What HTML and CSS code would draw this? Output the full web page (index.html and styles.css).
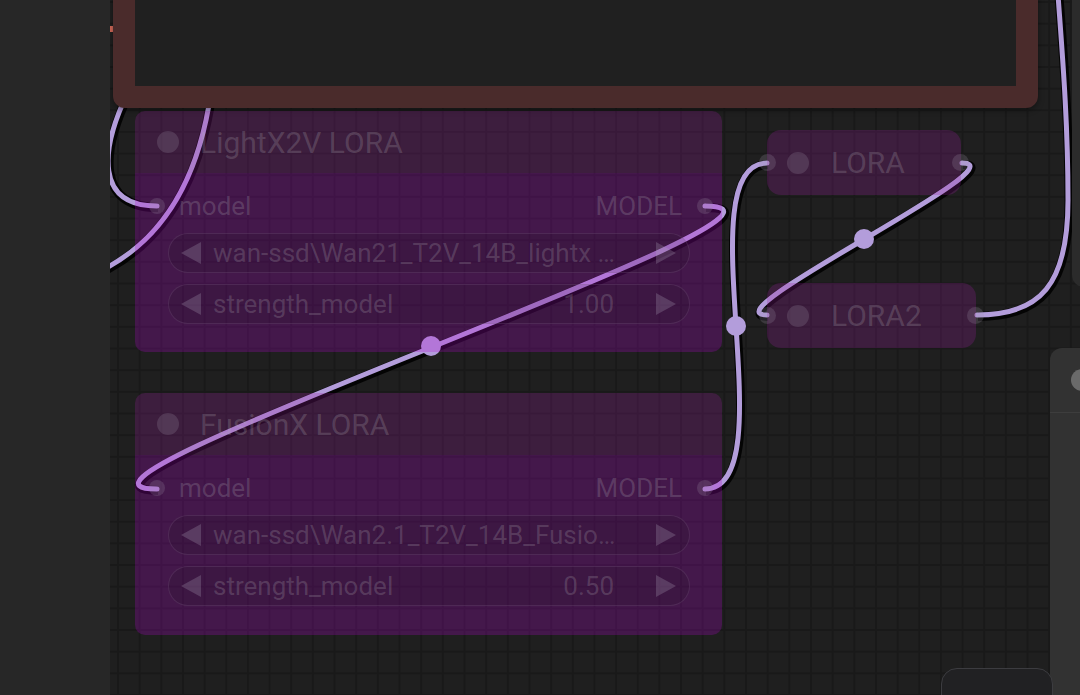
FILE: index.html
```html
<!DOCTYPE html>
<html lang="en">
<head>
  <meta charset="UTF-8">
  <meta name="viewport" content="width=device-width, initial-scale=1.0">
  <title>Graph</title>
  <link rel="stylesheet" href="styles.css">
</head>
<body>
  <aside class="sidebar"></aside>

  <main class="canvas">
    <!-- links (drawn under nodes) -->
    <svg class="links" viewBox="110 0 970 695" xmlns="http://www.w3.org/2000/svg">
      <defs>
        <path id="l1" d="M 128 92 C 100 150, 95 206, 157 206" />
        <path id="l2" d="M 211 92 C 200 170, 170 235, 104 269" />
        <path id="l3" d="M 705 206 C 859 206, 3 489, 157 489" />
        <path id="l4" d="M 705 489 C 788 489, 684 163, 767 163" />
        <path id="l5" d="M 962 163 C 1024 163, 705 315, 767 315" />
        <path id="l6" d="M 977 315 C 1040 315, 1068 285, 1068 200 C 1068 120, 1062 50, 1058 -5" />
      </defs>
      <g class="wire-shadow" transform="translate(1 1.5)">
        <use href="#l1" /><use href="#l2" /><use href="#l3" />
        <use href="#l4" /><use href="#l5" /><use href="#l6" />
      </g>
      <g class="wire">
        <use href="#l1" /><use href="#l2" /><use href="#l3" />
        <use href="#l4" /><use href="#l5" /><use href="#l6" />
      </g>
      <g class="wire-dot">
        <circle cx="431" cy="346" r="10" />
        <circle cx="736" cy="326" r="10" />
        <circle cx="864" cy="239" r="10" />
      </g>
    </svg>

    <div class="red-stub"></div>
    <div class="frame"></div>

    <div class="node node-a">
      <div class="node-title"><span class="title-dot"></span>LightX2V LORA</div>
      <div class="node-body">
        <div class="slots">
          <span class="slot-dot"></span>
          <span class="slot-in">model</span>
          <span class="slot-out">MODEL</span>
          <span class="slot-dot"></span>
        </div>
        <div class="widgets">
          <div class="widget">
            <svg class="arrow" viewBox="0 0 20 22"><polygon points="20,0 20,22 0,11" /></svg>
            <span class="w-name">wan-ssd\Wan21_T2V_14B_lightx …</span>
            <svg class="arrow" viewBox="0 0 20 22"><polygon points="0,0 0,22 20,11" /></svg>
          </div>
          <div class="widget">
            <svg class="arrow" viewBox="0 0 20 22"><polygon points="20,0 20,22 0,11" /></svg>
            <span class="w-name">strength_model</span>
            <span class="w-value">1.00</span>
            <svg class="arrow" viewBox="0 0 20 22"><polygon points="0,0 0,22 20,11" /></svg>
          </div>
        </div>
      </div>
    </div>

    <div class="node node-b">
      <div class="node-title"><span class="title-dot"></span>FusionX LORA</div>
      <div class="node-body">
        <div class="slots">
          <span class="slot-dot"></span>
          <span class="slot-in">model</span>
          <span class="slot-out">MODEL</span>
          <span class="slot-dot"></span>
        </div>
        <div class="widgets">
          <div class="widget">
            <svg class="arrow" viewBox="0 0 20 22"><polygon points="20,0 20,22 0,11" /></svg>
            <span class="w-name">wan-ssd\Wan2.1_T2V_14B_Fusio…</span>
            <svg class="arrow" viewBox="0 0 20 22"><polygon points="0,0 0,22 20,11" /></svg>
          </div>
          <div class="widget">
            <svg class="arrow" viewBox="0 0 20 22"><polygon points="20,0 20,22 0,11" /></svg>
            <span class="w-name">strength_model</span>
            <span class="w-value">0.50</span>
            <svg class="arrow" viewBox="0 0 20 22"><polygon points="0,0 0,22 20,11" /></svg>
          </div>
        </div>
      </div>
    </div>

    <div class="mini mini-a">
      <span class="mini-slot in"></span>
      <span class="title-dot"></span>LORA
      <span class="mini-slot out"></span>
    </div>
    <div class="mini mini-b">
      <span class="mini-slot in"></span>
      <span class="title-dot"></span>LORA2
      <span class="mini-slot out"></span>
    </div>

    <div class="panel-top"></div>
    <div class="panel-side">
      <div class="panel-head"><span class="panel-knob"></span></div>
    </div>
    <div class="dock"></div>
  </main>
</body>
</html>
```

FILE: styles.css
```css
:root {
  --sidebar: #272727;
  --bg: #1f1f1f;
  --grid: #191919;
  --frame: #4a2b2b;
  --wire: #b39ddb;
  --node-title: rgba(150, 28, 155, 0.25);
  --node-body: rgba(178, 5, 206, 0.25);
  --node-text: rgba(180, 180, 185, 0.23);
  --node-dot: rgba(160, 150, 170, 0.22);
}

* {
  margin: 0;
  padding: 0;
  box-sizing: border-box;
}

body {
  width: 1080px;
  height: 695px;
  display: flex;
  overflow: hidden;
  font-family: Roboto, 'Liberation Sans', sans-serif;
  background-color: var(--bg);
}

.sidebar {
  width: 110px;
  flex-shrink: 0;
  background-color: var(--sidebar);
}

.canvas {
  flex: 1;
  position: relative;
  overflow: hidden;
  background-color: var(--bg);
  background-image:
    linear-gradient(to right, var(--grid) 2px, transparent 2px),
    linear-gradient(to bottom, var(--grid) 2px, transparent 2px);
  background-size: 21.67px 21.67px;
  background-position: 7px 1px;
}

/* links */
.links {
  position: absolute;
  top: 0;
  left: 0;
  width: 970px;
  height: 695px;
}

.links use {
  fill: none;
}

.wire-shadow {
  stroke: #000;
  stroke-width: 9;
  opacity: 0.85;
}

.wire {
  stroke: var(--wire);
  stroke-width: 5;
  stroke-linecap: round;
}

.wire-dot {
  fill: var(--wire);
}

.red-stub {
  position: absolute;
  left: 0;
  top: 26px;
  width: 3px;
  height: 6px;
  background-color: #d46a5a;
}

.frame {
  position: absolute;
  left: 3px;
  top: -40px;
  width: 925px;
  height: 148px;
  border: 22px solid var(--frame);
  border-radius: 12px;
  background-color: #202020;
  box-shadow: 0 2px 6px rgba(0, 0, 0, 0.4);
}

/* bypassed nodes */
.node {
  position: absolute;
  left: 25px;
  width: 587px;
  display: flex;
  flex-direction: column;
  border-radius: 10px;
  overflow: hidden;
  color: var(--node-text);
}

.node-a {
  top: 111px;
  height: 241px;
}

.node-b {
  top: 393px;
  height: 242px;
}

.node-title {
  height: 62px;
  flex-shrink: 0;
  display: flex;
  align-items: center;
  gap: 21px;
  padding-left: 22px;
  font-size: 30px;
  background-color: var(--node-title);
}

.title-dot {
  width: 22px;
  height: 22px;
  border-radius: 50%;
  background-color: var(--node-dot);
  flex-shrink: 0;
}

.node-body {
  flex: 1;
  padding-top: 13px;
  background-color: var(--node-body);
}

.slots {
  height: 40px;
  display: flex;
  align-items: center;
  padding: 0 9px 0 14px;
  font-size: 26px;
}

.slot-dot {
  width: 16px;
  height: 16px;
  border-radius: 50%;
  background-color: var(--node-dot);
}

.slot-in {
  margin-left: 14px;
}

.slot-out {
  margin-left: auto;
  margin-right: 15px;
}

.widgets {
  display: flex;
  flex-direction: column;
  gap: 11px;
  margin: 7px 32px 0 33px;
}

.widget {
  height: 40px;
  display: flex;
  align-items: center;
  gap: 12px;
  padding: 0 13px 0 12px;
  border-radius: 20px;
  border: 1.5px solid rgba(130, 100, 140, 0.25);
  background-color: rgba(20, 20, 20, 0.12);
  font-size: 26px;
  white-space: nowrap;
}

.arrow {
  width: 20px;
  height: 22px;
  flex-shrink: 0;
  fill: rgba(180, 170, 190, 0.25);
}

.w-name {
  flex: 1;
}

.w-value {
  margin-right: 30px;
}

/* collapsed nodes */
.mini {
  position: absolute;
  left: 657px;
  height: 65px;
  display: flex;
  align-items: center;
  gap: 22px;
  padding-left: 20px;
  border-radius: 14px;
  background-color: var(--node-title);
  color: var(--node-text);
  font-size: 30px;
}

.mini-a {
  top: 130px;
  width: 194px;
}

.mini-b {
  top: 283px;
  width: 209px;
}

.mini-slot {
  position: absolute;
  top: 24px;
  width: 17px;
  height: 17px;
  border-radius: 50%;
  background-color: var(--node-dot);
}

.mini-slot.in {
  left: -8px;
}

.mini-slot.out {
  right: -8px;
}

/* ui chrome at the right edge */
.panel-top {
  position: absolute;
  left: 962px;
  top: -20px;
  width: 40px;
  height: 307px;
  border-radius: 12px;
  background-color: #2b2b2b;
}

.panel-side {
  position: absolute;
  left: 940px;
  top: 348px;
  width: 60px;
  height: 352px;
  border-radius: 12px;
  background-color: #323232;
}

.panel-head {
  height: 65px;
  display: flex;
  align-items: center;
  padding-left: 21px;
  border-bottom: 1px solid #3d3d3d;
}

.panel-knob {
  width: 22px;
  height: 22px;
  border-radius: 50%;
  background-color: #6a6a6a;
}

.dock {
  position: absolute;
  left: 831px;
  top: 668px;
  width: 112px;
  height: 40px;
  border: 1.5px solid #3c3c40;
  border-radius: 16px 16px 0 0;
  background-color: #212123;
}
```
